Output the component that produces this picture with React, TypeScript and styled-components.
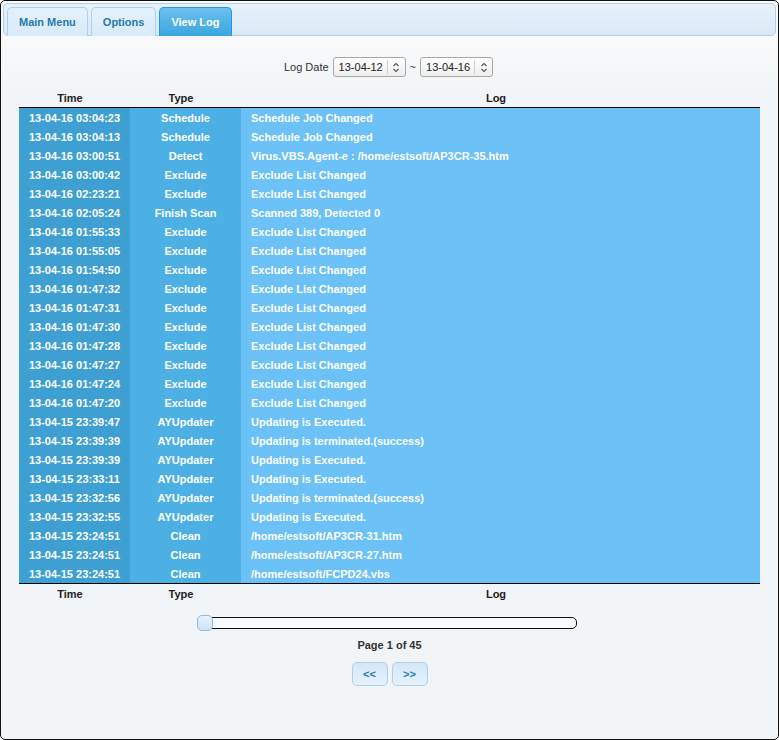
import React from "react";
import styled, { createGlobalStyle } from "styled-components";

const Global = createGlobalStyle`
  html, body { margin: 0; padding: 0; background: #fff; }
  body { font-family: "Liberation Sans", Arial, sans-serif; }
  * { box-sizing: border-box; }
`;

const Frame = styled.div`
  width: 779px;
  height: 740px;
  border: 1px solid #111;
  border-radius: 5px;
  padding: 2px;
  background: linear-gradient(#fbfcfd 0px, #f2f5f7 90px);
  display: flex;
  flex-direction: column;
`;

const TabBar = styled.div`
  height: 33px;
  flex: none;
  border: 1px solid #aed0ea;
  border-radius: 5px;
  background: linear-gradient(#e8f2fa, #d8e9f6);
  padding: 3px 3px 0 3px;
  display: flex;
  align-items: flex-end;
  gap: 3px;
`;

const Tab = styled.div<{ $active?: boolean }>`
  height: 29px;
  margin-bottom: -1px;
  padding: 0 11px;
  display: flex;
  align-items: center;
  font-size: 11px;
  font-weight: bold;
  border-radius: 5px 5px 0 0;
  border: 1px solid ${(p) => (p.$active ? "#2694e8" : "#aed0ea")};
  border-bottom: none;
  color: ${(p) => (p.$active ? "#ffffff" : "#2779aa")};
  background: ${(p) =>
    p.$active
      ? "linear-gradient(#6cc0ee, #3aa6e0)"
      : "linear-gradient(#e4f1fb, #d7ebf9)"};
`;

const Content = styled.div`
  padding: 21px 16px 0 16px;
  display: flex;
  flex-direction: column;
  align-items: center;
`;

const DateRow = styled.div`
  display: flex;
  align-items: center;
  height: 20px;
  margin-right: 2px;
  font-size: 11px;
  color: #333;
`;

const DateLabel = styled.span`
  margin-right: 4px;
`;

const Tilde = styled.span`
  margin: 0 4px;
`;

const Select = styled.div`
  width: 73px;
  height: 20px;
  border: 1px solid #a8a8a8;
  border-radius: 3px;
  background: linear-gradient(#ffffff, #ededed);
  display: flex;
  align-items: center;
  font-size: 11px;
  color: #222;
`;

const SelectText = styled.span`
  flex: 1;
  padding-left: 5px;
`;

const SelectArrow = styled.span`
  width: 18px;
  height: 14px;
  border-left: 1px solid #d0d0d0;
  display: flex;
  align-items: center;
  justify-content: center;
`;

const Table = styled.table`
  margin-top: 12px;
  width: 741px;
  border-collapse: separate;
  border-spacing: 0;
  font-size: 11px;
  font-weight: bold;
`;

const HeadCell = styled.th<{ $w?: number; $bottom?: boolean }>`
  padding: 0 9px 0 0;
  color: #222;
  font-weight: bold;
  text-align: center;
  width: ${(p) => (p.$w ? `${p.$w}px` : "auto")};
  ${(p) =>
    p.$bottom
      ? "height: 20px; border-top: 1px solid #000;"
      : "height: 19px; border-bottom: 1px solid #000;"}
`;

const Cell = styled.td<{ $kind: "time" | "type" | "log" }>`
  height: 19px;
  padding: 0 ${(p) => (p.$kind === "log" ? "10px" : "0")};
  color: #fff;
  text-align: ${(p) => (p.$kind === "log" ? "left" : "center")};
  white-space: nowrap;
  background: ${(p) =>
    p.$kind === "time" ? "#3e9fd3" : p.$kind === "type" ? "#4db0e5" : "#6cc1f7"};
`;

const SliderTrack = styled.div`
  margin-top: 14px;
  margin-right: 6px;
  width: 380px;
  height: 12px;
  border: 1px solid #111;
  border-radius: 5px;
  background: #f8fafc;
  position: relative;
`;

const SliderHandle = styled.div`
  position: absolute;
  left: -1px;
  top: -3px;
  width: 16px;
  height: 16px;
  border: 1px solid #8fbbe4;
  border-radius: 5px;
  background: linear-gradient(#e4f1fb, #cfe5f6);
`;

const PageText = styled.div`
  margin-top: 10px;
  font-size: 11px;
  font-weight: bold;
  color: #333;
`;

const Pager = styled.div`
  margin-top: 11px;
  display: flex;
  gap: 4px;
`;

const PageButton = styled.div`
  width: 36px;
  height: 24px;
  border: 1px solid #aed0ea;
  border-radius: 5px;
  background: linear-gradient(#d3e8f8, #e6f2fb);
  display: flex;
  align-items: center;
  justify-content: center;
  font-size: 11px;
  font-weight: bold;
  color: #2779aa;
`;

const rows: [string, string, string][] = [
  ["13-04-16 03:04:23", "Schedule", "Schedule Job Changed"],
  ["13-04-16 03:04:13", "Schedule", "Schedule Job Changed"],
  ["13-04-16 03:00:51", "Detect", "Virus.VBS.Agent-e : /home/estsoft/AP3CR-35.htm"],
  ["13-04-16 03:00:42", "Exclude", "Exclude List Changed"],
  ["13-04-16 02:23:21", "Exclude", "Exclude List Changed"],
  ["13-04-16 02:05:24", "Finish Scan", "Scanned 389, Detected 0"],
  ["13-04-16 01:55:33", "Exclude", "Exclude List Changed"],
  ["13-04-16 01:55:05", "Exclude", "Exclude List Changed"],
  ["13-04-16 01:54:50", "Exclude", "Exclude List Changed"],
  ["13-04-16 01:47:32", "Exclude", "Exclude List Changed"],
  ["13-04-16 01:47:31", "Exclude", "Exclude List Changed"],
  ["13-04-16 01:47:30", "Exclude", "Exclude List Changed"],
  ["13-04-16 01:47:28", "Exclude", "Exclude List Changed"],
  ["13-04-16 01:47:27", "Exclude", "Exclude List Changed"],
  ["13-04-16 01:47:24", "Exclude", "Exclude List Changed"],
  ["13-04-16 01:47:20", "Exclude", "Exclude List Changed"],
  ["13-04-15 23:39:47", "AYUpdater", "Updating is Executed."],
  ["13-04-15 23:39:39", "AYUpdater", "Updating is terminated.(success)"],
  ["13-04-15 23:39:39", "AYUpdater", "Updating is Executed."],
  ["13-04-15 23:33:11", "AYUpdater", "Updating is Executed."],
  ["13-04-15 23:32:56", "AYUpdater", "Updating is terminated.(success)"],
  ["13-04-15 23:32:55", "AYUpdater", "Updating is Executed."],
  ["13-04-15 23:24:51", "Clean", "/home/estsoft/AP3CR-31.htm"],
  ["13-04-15 23:24:51", "Clean", "/home/estsoft/AP3CR-27.htm"],
  ["13-04-15 23:24:51", "Clean", "/home/estsoft/FCPD24.vbs"],
];

const UpDown = () => (
  <svg width="8" height="11" viewBox="0 0 8 11" fill="none" stroke="#555" strokeWidth="1.1">
    <path d="M1.5 4 L4 1.5 L6.5 4" />
    <path d="M1.5 7 L4 9.5 L6.5 7" />
  </svg>
);

const DateSelect = ({ value }: { value: string }) => (
  <Select>
    <SelectText>{value}</SelectText>
    <SelectArrow>
      <UpDown />
    </SelectArrow>
  </Select>
);

export default function App() {
  return (
    <>
      <Global />
      <Frame>
        <TabBar>
          <Tab>Main Menu</Tab>
          <Tab>Options</Tab>
          <Tab $active>View Log</Tab>
        </TabBar>
        <Content>
          <DateRow>
            <DateLabel>Log Date</DateLabel>
            <DateSelect value="13-04-12" />
            <Tilde>~</Tilde>
            <DateSelect value="13-04-16" />
          </DateRow>
          <Table>
            <thead>
              <tr>
                <HeadCell $w={111}>Time</HeadCell>
                <HeadCell $w={111}>Type</HeadCell>
                <HeadCell>Log</HeadCell>
              </tr>
            </thead>
            <tbody>
              {rows.map((r, i) => (
                <tr key={i}>
                  <Cell $kind="time">{r[0]}</Cell>
                  <Cell $kind="type">{r[1]}</Cell>
                  <Cell $kind="log">{r[2]}</Cell>
                </tr>
              ))}
            </tbody>
            <tfoot>
              <tr>
                <HeadCell $bottom>Time</HeadCell>
                <HeadCell $bottom>Type</HeadCell>
                <HeadCell $bottom>Log</HeadCell>
              </tr>
            </tfoot>
          </Table>
          <SliderTrack>
            <SliderHandle />
          </SliderTrack>
          <PageText>Page 1 of 45</PageText>
          <Pager>
            <PageButton>&lt;&lt;</PageButton>
            <PageButton>&gt;&gt;</PageButton>
          </Pager>
        </Content>
      </Frame>
    </>
  );
}
